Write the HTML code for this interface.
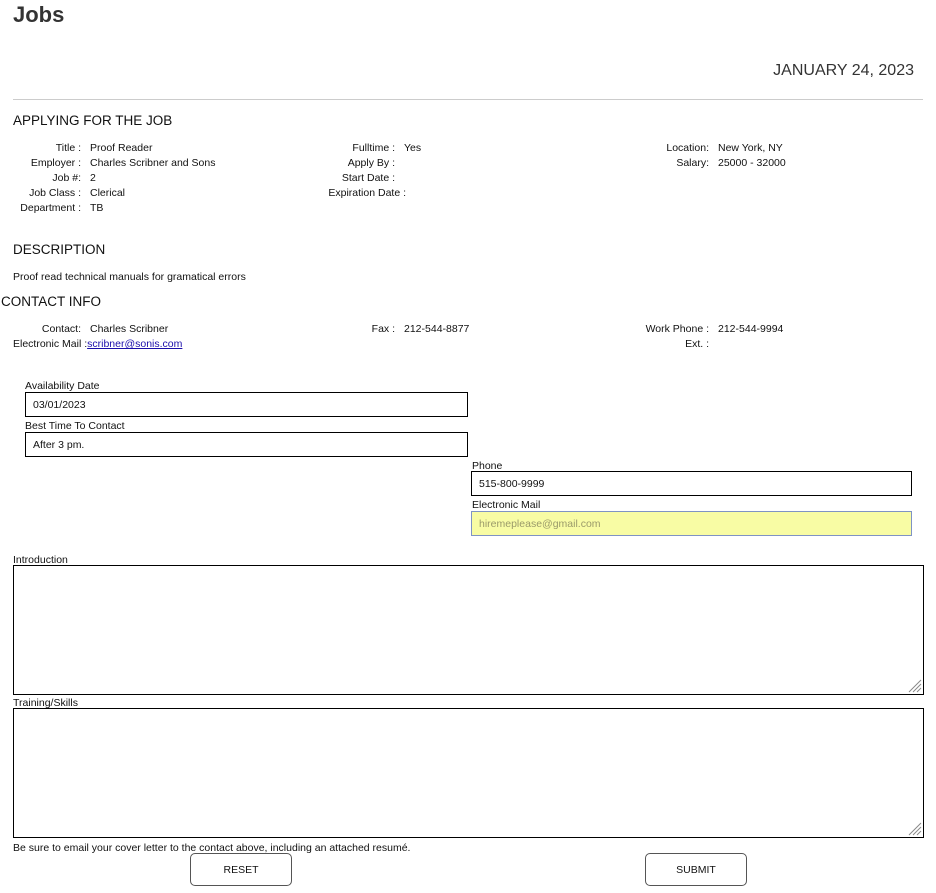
<!DOCTYPE html>
<html><head><meta charset="utf-8"><style>
body{margin:0;width:936px;height:893px;background:#fff;font-family:"Liberation Sans",Arial,sans-serif;color:#111;position:relative;overflow:hidden}
.a{position:absolute;white-space:nowrap;font-size:10.5px;line-height:12px;margin-top:2px}
.r{text-align:right}
.h{position:absolute;font-size:13.5px;line-height:16px;color:#111;white-space:nowrap;margin-top:1px}
.box{position:absolute;border:1px solid #000;box-sizing:border-box;font-size:10.5px;line-height:12px;padding-left:7px;padding-top:1px}
.grip{position:absolute;right:1px;bottom:1px}
.btn{position:absolute;border:1px solid #555;border-radius:5px;box-sizing:border-box;font-size:10.5px;text-align:center;line-height:33px;height:33px;width:102px}
</style></head><body>
<div style="position:absolute;left:13px;top:2px;font-size:22px;font-weight:bold;color:#333;line-height:26px">Jobs</div>
<div style="position:absolute;right:22px;top:62px;font-size:16px;color:#333;line-height:18px">JANUARY 24, 2023</div>
<div style="position:absolute;left:13px;top:99px;width:910px;height:1px;background:#ccc"></div>
<div class="h" style="left:13px;top:112px">APPLYING FOR THE JOB</div>

<div class="a r" style="left:0;width:81px;top:140px">Title :</div><div class="a" style="left:90px;top:140px">Proof Reader</div>
<div class="a r" style="left:0;width:81px;top:155px">Employer :</div><div class="a" style="left:90px;top:155px">Charles Scribner and Sons</div>
<div class="a r" style="left:0;width:81px;top:170px">Job #:</div><div class="a" style="left:90px;top:170px">2</div>
<div class="a r" style="left:0;width:81px;top:185px">Job Class :</div><div class="a" style="left:90px;top:185px">Clerical</div>
<div class="a r" style="left:0;width:81px;top:200px">Department :</div><div class="a" style="left:90px;top:200px">TB</div>

<div class="a r" style="left:200px;width:195px;top:140px">Fulltime :</div><div class="a" style="left:404px;top:140px">Yes</div>
<div class="a r" style="left:200px;width:195px;top:155px">Apply By :</div>
<div class="a r" style="left:200px;width:195px;top:170px">Start Date :</div>
<div class="a r" style="left:200px;width:206px;top:185px">Expiration Date :</div>

<div class="a r" style="left:500px;width:209px;top:140px">Location:</div><div class="a" style="left:718px;top:140px">New York, NY</div>
<div class="a r" style="left:500px;width:209px;top:155px">Salary:</div><div class="a" style="left:718px;top:155px">25000 - 32000</div>

<div class="h" style="left:13px;top:241px">DESCRIPTION</div>
<div class="a" style="left:13px;top:269px">Proof read technical manuals for gramatical errors</div>
<div class="h" style="left:1px;top:293px">CONTACT INFO</div>

<div class="a r" style="left:0;width:81px;top:321px">Contact:</div><div class="a" style="left:90px;top:321px">Charles Scribner</div>
<div class="a" style="left:13px;top:336px">Electronic Mail :<span style="color:#1a0dab;text-decoration:underline">scribner@sonis.com</span></div>
<div class="a r" style="left:200px;width:195px;top:321px">Fax :</div><div class="a" style="left:404px;top:321px">212-544-8877</div>
<div class="a r" style="left:500px;width:209px;top:321px">Work Phone :</div><div class="a" style="left:718px;top:321px">212-544-9994</div>
<div class="a r" style="left:500px;width:209px;top:336px">Ext. :</div>

<div class="a" style="left:25px;top:378px">Availability Date</div>
<div class="box" style="left:25px;top:392px;width:443px;height:25px;line-height:23px">03/01/2023</div>
<div class="a" style="left:25px;top:418px">Best Time To Contact</div>
<div class="box" style="left:25px;top:432px;width:443px;height:25px;line-height:23px">After 3 pm.</div>

<div class="a" style="left:472px;top:458px">Phone</div>
<div class="box" style="left:471px;top:471px;width:441px;height:25px;line-height:23px">515-800-9999</div>
<div class="a" style="left:472px;top:497px">Electronic Mail</div>
<div class="box" style="left:471px;top:511px;width:441px;height:25px;line-height:23px;background:#f8fca4;border-color:#7f93c4;color:#9a9a6a">hiremeplease@gmail.com</div>

<div class="a" style="left:13px;top:552px">Introduction</div>
<div class="box" style="left:13px;top:565px;width:911px;height:130px">
<svg class="grip" width="14" height="14" viewBox="0 0 14 14"><g stroke="#888" stroke-width="1"><line x1="13" y1="1" x2="1" y2="13"/><line x1="13" y1="5" x2="5" y2="13"/><line x1="13" y1="9" x2="9" y2="13"/></g></svg></div>
<div class="a" style="left:13px;top:695px">Training/Skills</div>
<div class="box" style="left:13px;top:708px;width:911px;height:130px">
<svg class="grip" width="14" height="14" viewBox="0 0 14 14"><g stroke="#888" stroke-width="1"><line x1="13" y1="1" x2="1" y2="13"/><line x1="13" y1="5" x2="5" y2="13"/><line x1="13" y1="9" x2="9" y2="13"/></g></svg></div>
<div class="a" style="left:13px;top:840px">Be sure to email your cover letter to the contact above, including an attached resumé.</div>

<div class="btn" style="left:190px;top:853px">RESET</div>
<div class="btn" style="left:645px;top:853px">SUBMIT</div>
</body></html>
